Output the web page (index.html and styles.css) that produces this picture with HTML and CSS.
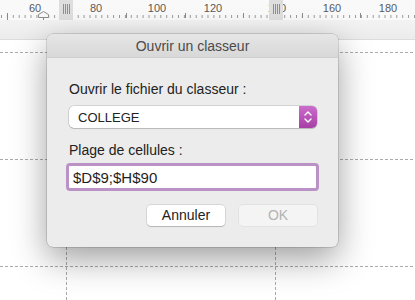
FILE: index.html
```html
<!DOCTYPE html>
<html lang="fr">

<head>
  <meta charset="UTF-8">
  <meta name="viewport" content="width=device-width, initial-scale=1.0">
  <title>Ouvrir un classeur</title>
  <link rel="stylesheet" href="styles.css">
</head>

<body>
  <div class="screen">
    <div class="ruler">
      <svg width="415" height="20" viewBox="0 0 415 20">
        <defs>
          <pattern id="ticks" x="1" y="0" width="5.9" height="20" patternUnits="userSpaceOnUse">
            <rect x="0" y="15" width="1" height="3" fill="#9a9a9a"></rect>
          </pattern>
        </defs>
        <rect x="0" y="0" width="415" height="20" fill="url(#ticks)"></rect>
        <g fill="#8a8a8a">
          <rect x="7" y="13" width="1" height="7"></rect>
          <rect x="126" y="13" width="1" height="5"></rect>
          <rect x="185" y="13" width="1" height="5"></rect>
          <rect x="243" y="13" width="1" height="5"></rect>
          <rect x="302" y="13" width="1" height="5"></rect>
          <rect x="360" y="13" width="1" height="5"></rect>
        </g>
        <g class="ruler-labels" text-anchor="middle">
          <text x="35" y="12">60</text>
          <text x="96" y="12">80</text>
          <text x="157" y="12">100</text>
          <text x="213" y="12">120</text>
          <text x="277" y="12">140</text>
          <text x="332" y="12">160</text>
          <text x="388" y="12">180</text>
        </g>
        <!-- indent marker -->
        <path d="M38.5 17.5 V14.5 L43.5 11.5 L48.5 14.5 V17.5 Z" fill="#f7f7f7" stroke="#8c8c8c"></path>
        <rect x="43" y="17" width="1" height="3" fill="#8c8c8c"></rect>
        <!-- margin handles -->
        <g>
          <rect x="59" y="0" width="14" height="20" fill="#dedede"></rect>
          <rect x="63" y="4" width="1" height="10" fill="#8f8f8f"></rect>
          <rect x="65" y="4" width="1" height="10" fill="#8f8f8f"></rect>
          <rect x="67" y="4" width="1" height="10" fill="#8f8f8f"></rect>
          <rect x="69" y="4" width="1" height="10" fill="#8f8f8f"></rect>
        </g>
        <g>
          <rect x="269" y="0" width="14" height="20" fill="#dedede"></rect>
          <rect x="273" y="4" width="1" height="10" fill="#8f8f8f"></rect>
          <rect x="275" y="4" width="1" height="10" fill="#8f8f8f"></rect>
          <rect x="277" y="4" width="1" height="10" fill="#8f8f8f"></rect>
          <rect x="279" y="4" width="1" height="10" fill="#8f8f8f"></rect>
        </g>
      </svg>
    </div>
    <div class="band"></div>
    <div class="sheet">
      <svg class="page-lines" width="415" height="260" viewBox="0 0 415 260">
        <g stroke="#ababab" stroke-width="1" stroke-dasharray="3 2">
          <line x1="0" y1="12.5" x2="415" y2="12.5"></line>
          <line x1="0" y1="119.5" x2="415" y2="119.5"></line>
          <line x1="0" y1="226.5" x2="415" y2="226.5"></line>
          <line x1="66.5" y1="12" x2="66.5" y2="260"></line>
          <line x1="275.5" y1="12" x2="275.5" y2="260"></line>
        </g>
      </svg>
    </div>

    <div class="dialog">
      <div class="dialog-title">Ouvrir un classeur</div>
      <div class="dialog-body">
        <div class="field-label first">Ouvrir le fichier du classeur :</div>
        <div class="select">
          <span class="select-value">COLLEGE</span>
          <span class="stepper">
            <svg width="18" height="22" viewBox="0 0 18 22">
              <path d="M6 9 L9 6 L12 9" fill="none" stroke="#fff" stroke-width="1.4" stroke-linecap="round" stroke-linejoin="round"></path>
              <path d="M6 13 L9 16 L12 13" fill="none" stroke="#fff" stroke-width="1.4" stroke-linecap="round" stroke-linejoin="round"></path>
            </svg>
          </span>
        </div>
        <div class="field-label">Plage de cellules :</div>
        <div class="range-input">$D$9;$H$90</div>
        <div class="buttons">
          <div class="btn">Annuler</div>
          <div class="btn disabled">OK</div>
        </div>
      </div>
    </div>
  </div>
</body>
</html>
```

FILE: styles.css
```css
body {
  margin: 0;
  background-color: #fff;
  font-family: "Liberation Sans", Arial, sans-serif;
}
.screen {
  position: relative;
  width: 415px;
  height: 300px;
  overflow: hidden;
}
.ruler {
  height: 20px;
  background-color: #f9f9f9;
}
.ruler svg {
  display: block;
}
.ruler-labels {
  font-family: "Liberation Sans", Arial, sans-serif;
  font-size: 11px;
  fill: #5a5a5a;
}
.band {
  height: 19px;
  background: linear-gradient(#f3f3f3, #ececec);
  border-bottom: 1px solid #dcdcdc;
}
.sheet {
  height: 260px;
  background-color: #fff;
}
.page-lines {
  display: block;
}

.dialog {
  position: absolute;
  left: 47px;
  top: 34px;
  width: 291px;
  height: 213px;
  background-color: #ececec;
  border-radius: 6px;
  box-shadow: 0 0 0 0.5px rgba(0, 0, 0, 0.25), 0 12px 34px rgba(0, 0, 0, 0.38);
  overflow: hidden;
}
.dialog-title {
  height: 23px;
  line-height: 24px;
  text-align: center;
  font-size: 14px;
  color: #4b4b4b;
  background: linear-gradient(#e6e6e6, #d8d8d8);
  border-bottom: 1px solid #cfcfcf;
}
.dialog-body {
  padding: 0 21px 0 22px;
}
.field-label {
  font-size: 14px;
  line-height: 17px;
  color: #222;
  margin-top: 14px;
  margin-bottom: 4px;
}
.field-label.first {
  margin-top: 23px;
  margin-bottom: 8px;
}
.select {
  display: flex;
  align-items: center;
  height: 22px;
  background-color: #fff;
  border-radius: 5px;
  box-shadow: 0 0 0 0.5px rgba(0, 0, 0, 0.22), 0 1px 1px rgba(0, 0, 0, 0.12);
}
.select-value {
  flex: 1;
  padding-left: 9px;
  font-size: 13px;
  color: #222;
}
.stepper {
  width: 18px;
  height: 22px;
  border-radius: 0 5px 5px 0;
  background: linear-gradient(#cc6ccc, #a63fa6);
}
.stepper svg {
  display: block;
}
.range-input {
  margin-left: -3px;
  margin-right: -2px;
  height: 22px;
  line-height: 23px;
  padding-left: 4px;
  font-size: 15px;
  color: #1e1e1e;
  background-color: #fff;
  border: 3px solid #bb92c6;
  border-radius: 4px;
}
.buttons {
  display: flex;
  justify-content: flex-end;
  gap: 14px;
  margin-top: 14px;
}
.btn {
  width: 78px;
  height: 21px;
  line-height: 21px;
  text-align: center;
  font-size: 14px;
  color: #222;
  background-color: #fff;
  border-radius: 4px;
  box-shadow: 0 0 0 0.5px rgba(0, 0, 0, 0.18), 0 1px 1px rgba(0, 0, 0, 0.15);
}
.btn.disabled {
  color: #b3b3b3;
  background-color: #f4f4f4;
  box-shadow: 0 0 0 0.5px rgba(0, 0, 0, 0.08);
}
```
